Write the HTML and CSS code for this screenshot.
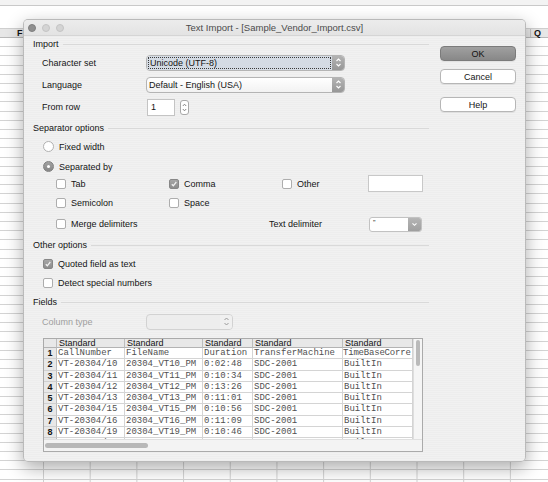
FILE: index.html
```html
<!DOCTYPE html>
<html>
<head>
<meta charset="utf-8">
<title>Text Import</title>
<link rel="stylesheet" href="styles.css">
</head>
<body>
<div class="sheet">
  <div class="sheet-top"></div>
  <div class="colhead"><span class="colname col-f">F</span><span class="colname col-q">Q</span></div>
  <div class="grid"></div>
</div>

<div class="dialog">
  <div class="titlebar">
    <div class="lights"><span class="light light-close"></span><span class="light"></span><span class="light"></span></div>
    <div class="title">Text Import - [Sample_Vendor_Import.csv]</div>
    <div></div>
  </div>
  <div class="body">
    <div class="main">
      <div class="heading"><span>Import</span></div>
      <div class="row field r-charset">
        <span class="label">Character set</span>
        <div class="select select-focus">
          <span class="select-text"><span class="focus-ring">Unicode (UTF-8)</span></span>
          <span class="stepper"><svg width="7" height="11" viewBox="0 0 7 11"><path d="M1.5 4 L3.5 2 L5.5 4 M1.5 7 L3.5 9 L5.5 7" fill="none" stroke="#fff" stroke-width="1.1"/></svg></span>
        </div>
      </div>
      <div class="row field r-lang">
        <span class="label">Language</span>
        <div class="select">
          <span class="select-text">Default - English (USA)</span>
          <span class="stepper"><svg width="7" height="11" viewBox="0 0 7 11"><path d="M1.5 4 L3.5 2 L5.5 4 M1.5 7 L3.5 9 L5.5 7" fill="none" stroke="#fff" stroke-width="1.1"/></svg></span>
        </div>
      </div>
      <div class="row field r-from">
        <span class="label">From row</span>
        <div class="numbox">1</div>
        <div class="spin"><svg width="7" height="13" viewBox="0 0 7 13"><path d="M1.8 5 L3.5 3.2 L5.2 5 M1.8 8 L3.5 9.8 L5.2 8" fill="none" stroke="#777" stroke-width="0.9"/></svg></div>
      </div>

      <div class="heading h-sep"><span>Separator options</span></div>
      <div class="row r-fixed">
        <span class="opt"><span class="rb"></span>Fixed width</span>
      </div>
      <div class="row r-sepby">
        <span class="opt"><span class="rb on"></span>Separated by</span>
      </div>
      <div class="row r-tab">
        <span class="opt c1"><span class="cb"></span>Tab</span>
        <span class="opt c2"><span class="cb on"><svg width="8" height="8" viewBox="0 0 8 8"><path d="M1.8 4.2 L3.3 5.8 L6.3 2" fill="none" stroke="#f0f0f0" stroke-width="1.3"/></svg></span>Comma</span>
        <span class="opt c3"><span class="cb"></span>Other</span>
        <span class="textbox"></span>
      </div>
      <div class="row r-semi">
        <span class="opt c1"><span class="cb"></span>Semicolon</span>
        <span class="opt c2"><span class="cb"></span>Space</span>
      </div>
      <div class="row r-merge">
        <span class="opt merge"><span class="cb"></span>Merge delimiters</span>
        <span class="delim-label">Text delimiter</span>
        <div class="dropdown">
          <span class="dropdown-text">"</span>
          <span class="drop-btn"><svg width="7" height="5" viewBox="0 0 7 5"><path d="M1.5 1.3 L3.5 3.3 L5.5 1.3" fill="none" stroke="#fff" stroke-width="1.1"/></svg></span>
        </div>
      </div>

      <div class="heading h-other"><span>Other options</span></div>
      <div class="row r-quoted">
        <span class="opt"><span class="cb on"><svg width="8" height="8" viewBox="0 0 8 8"><path d="M1.8 4.2 L3.3 5.8 L6.3 2" fill="none" stroke="#f0f0f0" stroke-width="1.3"/></svg></span>Quoted field as text</span>
      </div>
      <div class="row r-detect">
        <span class="opt"><span class="cb"></span>Detect special numbers</span>
      </div>

      <div class="heading h-fields"><span>Fields</span></div>
      <div class="row field r-coltype">
        <span class="label disabled">Column type</span>
        <div class="select select-disabled">
          <span class="select-text"></span>
          <span class="stepper stepper-light"><svg width="7" height="11" viewBox="0 0 7 11"><path d="M1.5 4 L3.5 2 L5.5 4 M1.5 7 L3.5 9 L5.5 7" fill="none" stroke="#9a9a9a" stroke-width="1"/></svg></span>
        </div>
      </div>

      <div class="table">
        <div class="tgrid">
          <div class="th"></div><div class="th">Standard</div><div class="th">Standard</div><div class="th">Standard</div><div class="th">Standard</div><div class="th">Standard</div>

          <div class="rn">1</div><div class="td">CallNumber</div><div class="td">FileName</div><div class="td">Duration</div><div class="td">TransferMachine</div><div class="td tight">TimeBaseCorre</div>
          <div class="rn">2</div><div class="td">VT-20304/10</div><div class="td">20304_VT10_PM</div><div class="td">0:02:48</div><div class="td">SDC-2001</div><div class="td">BuiltIn</div>
          <div class="rn">3</div><div class="td">VT-20304/11</div><div class="td">20304_VT11_PM</div><div class="td">0:10:34</div><div class="td">SDC-2001</div><div class="td">BuiltIn</div>
          <div class="rn">4</div><div class="td">VT-20304/12</div><div class="td">20304_VT12_PM</div><div class="td">0:13:26</div><div class="td">SDC-2001</div><div class="td">BuiltIn</div>
          <div class="rn">5</div><div class="td">VT-20304/13</div><div class="td">20304_VT13_PM</div><div class="td">0:11:01</div><div class="td">SDC-2001</div><div class="td">BuiltIn</div>
          <div class="rn">6</div><div class="td">VT-20304/15</div><div class="td">20304_VT15_PM</div><div class="td">0:10:56</div><div class="td">SDC-2001</div><div class="td">BuiltIn</div>
          <div class="rn">7</div><div class="td">VT-20304/16</div><div class="td">20304_VT16_PM</div><div class="td">0:11:09</div><div class="td">SDC-2001</div><div class="td">BuiltIn</div>
          <div class="rn">8</div><div class="td">VT-20304/19</div><div class="td">20304_VT19_PM</div><div class="td">0:10:46</div><div class="td">SDC-2001</div><div class="td">BuiltIn</div>
          <div class="rn">9</div><div class="td">VT-20304/20</div><div class="td">20304_VT20_PM</div><div class="td">0:12:15</div><div class="td">SDC-2001</div><div class="td">BuiltIn</div>
        </div>
        <div class="vscroll"><div class="vthumb"></div></div>
        <div class="hscroll"><div class="hthumb"></div></div>
      </div>
    </div>

    <div class="buttons">
      <div class="btn btn-default">OK</div>
      <div class="btn btn-cancel">Cancel</div>
      <div class="btn btn-help">Help</div>
    </div>
  </div>
</div>
</body>
</html>
```

FILE: styles.css
```css
* { box-sizing: border-box; }
html, body { margin: 0; padding: 0; }
body {
  width: 548px;
  height: 482px;
  overflow: hidden;
  position: relative;
  background: #fff;
  font-family: "Liberation Sans", Arial, sans-serif;
  font-size: 9px;
  color: #141414;
}

/* spreadsheet behind the dialog */
.sheet { width: 548px; height: 482px; display: flex; flex-direction: column; }
.sheet-top {
  height: 28px;
  flex: none;
  background: linear-gradient(to bottom, #f3f3f3 0, #f3f3f3 5px, #c9c9c9 5px, #c9c9c9 6px, #ffffff 6px);
}
.colhead {
  height: 10px;
  flex: none;
  display: flex;
  justify-content: space-between;
  background: #e7e7e7;
  border-top: 1px solid #cfcfcf;
  border-bottom: 1px solid #b9b9b9;
  font-weight: bold;
  line-height: 8px;
}
.col-f { padding-left: 17px; }
.col-q { width: 18px; padding-left: 3px; border-left: 1px solid #c4c4c4; }
.grid {
  flex: 1;
  background-image:
    repeating-linear-gradient(to bottom, transparent 0, transparent 8.2px, #d3d3d3 8.2px, #d3d3d3 9.2px),
    linear-gradient(to right, #d3d3d3 0, #d3d3d3 1px, transparent 1px);
  background-size: 100% 100%, 46.7px 100%;
  background-position: 0 0, 43px 0;
  background-repeat: no-repeat, repeat-x;
}

/* dialog window */
.dialog {
  position: absolute;
  left: 23px;
  top: 19px;
  width: 503px;
  height: 443px;
  border-radius: 5px;
  border: 1px solid rgba(0, 0, 0, 0.22);
  box-shadow: 0 6px 18px rgba(0, 0, 0, 0.33);
  background: repeating-linear-gradient(to bottom, #ededed 0, #ededed 1px, #f1f1f1 1px, #f1f1f1 2px);
  overflow: hidden;
  display: flex;
  flex-direction: column;
}
.titlebar {
  height: 16px;
  flex: none;
  display: grid;
  grid-template-columns: 70px 1fr 70px;
  align-items: center;
  background: linear-gradient(#ececec, #e3e3e3);
  border-bottom: 1px solid #d5d5d5;
}
.lights { display: flex; gap: 6px; padding-left: 4px; }
.light {
  width: 8px;
  height: 8px;
  border-radius: 50%;
  background: #d4d4d4;
  border: 1px solid #c3c3c3;
}
.light-close { background: #8f8f8f; border-color: #7e7e7e; }
.title { text-align: center; color: #4b4b4b; font-size: 9.5px; white-space: nowrap; }

.body { flex: 1; display: flex; gap: 11px; padding: 2px 9px 9px 9px; }
.main { width: 396px; flex: none; display: flex; flex-direction: column; }

.heading { height: 12px; flex: none; display: flex; align-items: center; gap: 4px; }
.heading::after { content: ""; flex: 1; height: 1px; background: #d9d9d9; }
.h-sep { margin-top: 6px; }
.h-other { margin-top: 7px; }
.h-fields { margin-top: 6px; }

.row { display: flex; align-items: center; flex: none; }
.field { padding-left: 9px; }
.label { width: 104px; flex: none; }
.label.disabled { color: #9e9e9e; }

.r-charset { margin-top: 4px; height: 17px; }
.r-lang { margin-top: 5px; height: 17px; }
.r-from { margin-top: 5px; height: 18px; }
.r-fixed { margin-top: 5px; height: 15px; padding-left: 10px; }
.r-sepby { margin-top: 5px; height: 15px; padding-left: 10px; }
.r-tab { margin-top: 1px; height: 17px; padding-left: 23px; }
.r-semi { margin-top: 3px; height: 16px; padding-left: 23px; }
.r-merge { margin-top: 5px; height: 16px; padding-left: 23px; }
.r-quoted { margin-top: 5px; height: 15px; padding-left: 10px; }
.r-detect { margin-top: 4px; height: 15px; padding-left: 10px; }
.r-coltype { margin-top: 5px; height: 17px; }

/* selects */
.select {
  width: 199px;
  height: 16px;
  display: flex;
  border-radius: 4px;
  border: 1px solid #b4b4b4;
  background: linear-gradient(#ffffff, #f2f2f2);
  overflow: hidden;
}
.select-text { flex: 1; display: flex; align-items: center; padding-left: 2px; white-space: nowrap; }
.stepper {
  width: 12px;
  flex: none;
  display: flex;
  align-items: center;
  justify-content: center;
  background: linear-gradient(#b3b3b3, #979797);
}
.select-focus .select-text { background: #d4dbe4; padding: 1px; }
.focus-ring {
  flex: 1;
  height: 100%;
  border: 1px dotted #3a3a3a;
  display: flex;
  align-items: center;
  padding-left: 1px;
}
.select-disabled { width: 87px; background: #ededed; border-color: #d2d2d2; }
.stepper-light { background: #f0f0f0; }

.numbox {
  width: 28px;
  height: 17px;
  margin-left: 1px;
  background: #fff;
  border: 1px solid #c4c4c4;
  display: flex;
  align-items: center;
  padding-left: 3px;
}
.spin {
  width: 9px;
  height: 15px;
  margin-left: 5px;
  border: 1px solid #a9a9a9;
  border-radius: 3px;
  background: #fff;
  display: flex;
  align-items: center;
  justify-content: center;
}

/* options */
.opt { display: flex; align-items: center; gap: 5px; white-space: nowrap; }
.c1 { width: 113px; }
.c2 { width: 113px; }
.c3 { width: 86px; }
.merge { width: 213px; }
.delim-label { width: 100px; }

.cb {
  width: 10px;
  height: 10px;
  flex: none;
  border: 1px solid #adadad;
  border-radius: 2px;
  background: #fff;
  display: flex;
  align-items: center;
  justify-content: center;
}
.cb.on { background: linear-gradient(#a6a6a6, #8d8d8d); border-color: #878787; }
.rb {
  width: 11px;
  height: 11px;
  flex: none;
  border-radius: 50%;
  border: 1px solid #b1b1b1;
  background: #fff;
  display: flex;
  align-items: center;
  justify-content: center;
}
.rb.on { background: linear-gradient(#a2a2a2, #878787); border-color: #808080; }
.rb.on::after { content: ""; width: 3px; height: 3px; border-radius: 50%; background: #fff; }

.textbox { width: 55px; height: 17px; background: #fff; border: 1px solid #c8c8c8; }
.dropdown {
  width: 53px;
  height: 15px;
  display: flex;
  border: 1px solid #c2c2c2;
  border-radius: 3px;
  background: #fff;
  overflow: hidden;
}
.dropdown-text { flex: 1; padding-left: 3px; font-size: 7px; line-height: 10px; }
.drop-btn {
  width: 13px;
  display: flex;
  align-items: center;
  justify-content: center;
  background: linear-gradient(#b5b5b5, #9f9f9f);
}

/* buttons */
.buttons { width: 76px; flex: none; display: flex; flex-direction: column; padding-top: 8px; }
.btn {
  height: 15px;
  border-radius: 4px;
  display: flex;
  align-items: center;
  justify-content: center;
  background: #fff;
  border: 1px solid #b6b6b6;
  box-shadow: 0 1px 0 rgba(0, 0, 0, 0.06);
}
.btn-default { background: linear-gradient(#a0a0a0, #888888); border-color: #7b7b7b; color: #111; }
.btn-cancel { margin-top: 8px; }
.btn-help { margin-top: 13px; }

/* preview table */
.table {
  margin-top: 8px;
  margin-left: 10px;
  width: 380px;
  height: 114px;
  flex: none;
  display: flex;
  border: 1px solid #aaaaaa;
  background: #fff;
  position: relative;
  overflow: hidden;
}
.tgrid {
  width: 369px;
  flex: none;
  display: grid;
  grid-template-columns: 13px 68px 78px 50px 90px 70px;
  grid-template-rows: 9px;
  grid-auto-rows: 11.25px;
  align-content: start;
}
.th {
  background: #e8e8e8;
  border-right: 1px solid #bdbdbd;
  border-bottom: 1px solid #b3b3b3;
  padding-left: 2px;
  line-height: 8px;
  white-space: nowrap;
  overflow: hidden;
}
.rn {
  background: #e8e8e8;
  border-right: 1px solid #bdbdbd;
  border-bottom: 1px solid #d0d0d0;
  font-weight: bold;
  text-align: center;
  line-height: 10px;
}
.td {
  font-family: "Liberation Mono", "Courier New", monospace;
  font-size: 9px;
  color: #505050;
  border-right: 1px solid #d4d4d4;
  border-bottom: 1px solid #d4d4d4;
  padding-left: 1px;
  line-height: 10.25px;
  white-space: nowrap;
  overflow: hidden;
}
.td.tight { letter-spacing: -0.2px; padding-left: 0; }
.vscroll { width: 9px; flex: none; background: #f5f5f5; border-left: 1px solid #dedede; }
.vthumb { margin: 1px 0 0 2px; width: 4px; height: 26px; border-radius: 2px; background: #bababa; }
.hscroll {
  position: absolute;
  left: 0;
  right: 0;
  bottom: 0;
  height: 12px;
  background: #f3f3f3;
  border-top: 1px solid #e0e0e0;
}
.hthumb { margin: 3px 0 0 1px; width: 103px; height: 5px; border-radius: 3px; background: #b8b8b8; }
```
